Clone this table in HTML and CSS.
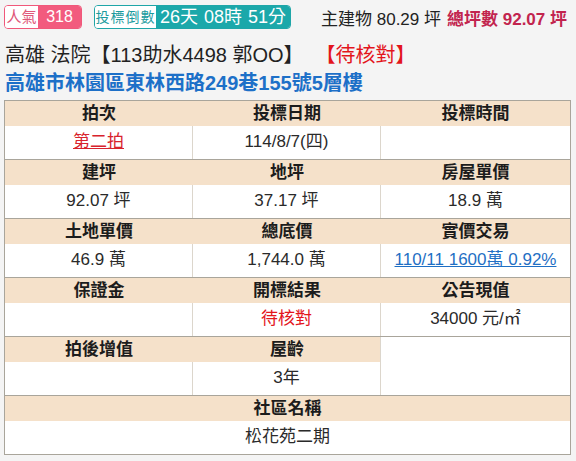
FILE: index.html
```html
<!DOCTYPE html>
<html lang="zh-Hant">
<head>
<meta charset="utf-8">
<link rel="stylesheet" href="styles.css">
</head>
<body>
<div class="page">
  <div class="topbar">
    <div class="badge pop"><span class="b-label">人氣</span><span class="b-value">318</span></div>
    <div class="badge count"><span class="b-label">投標倒數</span><span class="b-value">26天 08時 51分</span></div>
    <div class="area"><span class="main-area">主建物 80.29 坪</span><span class="total-area">總坪數 92.07 坪</span></div>
  </div>
  <div class="case-title">高雄 法院【113助水4498 郭OO】<span class="status">【待核對】</span></div>
  <div class="address">高雄市林園區東林西路249巷155號5層樓</div>

  <div class="info">
    <div class="grp">
      <div class="h">拍次</div><div class="h">投標日期</div><div class="h">投標時間</div>
      <div class="d"><span class="red-link">第二拍</span></div><div class="d">114/8/7(四)</div><div class="d"></div>
    </div>
    <div class="grp">
      <div class="h">建坪</div><div class="h">地坪</div><div class="h">房屋單價</div>
      <div class="d">92.07 坪</div><div class="d">37.17 坪</div><div class="d">18.9 萬</div>
    </div>
    <div class="grp">
      <div class="h">土地單價</div><div class="h">總底價</div><div class="h">實價交易</div>
      <div class="d">46.9 萬</div><div class="d">1,744.0 萬</div><div class="d"><span class="blue-link">110/11 1600萬 0.92%</span></div>
    </div>
    <div class="grp">
      <div class="h">保證金</div><div class="h">開標結果</div><div class="h">公告現值</div>
      <div class="d"></div><div class="d"><span class="red">待核對</span></div><div class="d">34000 元/㎡</div>
    </div>
    <div class="grp">
      <div class="h">拍後增值</div><div class="h">屋齡</div><div class="blank"></div>
      <div class="d"></div><div class="d">3年</div>
    </div>
    <div class="grp">
      <div class="h full">社區名稱</div>
      <div class="d full">松花苑二期</div>
    </div>
  </div>
</div>
</body>
</html>
```

FILE: styles.css
```css
html, body {
  margin: 0;
  padding: 0;
  background: #f4f4f4;
}
body {
  font-family: "Liberation Sans", "Noto Sans CJK TC", sans-serif;
  color: #222;
}
.page {
  padding: 5px 4px 0 4px;
}
.topbar {
  display: flex;
  align-items: center;
  height: 24px;
}
.badge {
  display: flex;
  height: 24px;
  box-sizing: border-box;
  border-radius: 4px;
  overflow: hidden;
  line-height: 22px;
}
.pop {
  border: 1px solid #f0587a;
  width: 78px;
}
.pop .b-label {
  background: #fff;
  color: #e0587a;
  font-size: 15px;
  width: 33px;
  text-align: center;
}
.pop .b-value {
  flex: 1;
  background: #f25b7e;
  color: #fff;
  font-size: 16px;
  text-align: center;
}
.count {
  margin-left: 12px;
  border: 1px solid #1fa6a8;
  width: 197px;
}
.count .b-label {
  background: #fff;
  color: #1b9b9e;
  font-size: 14px;
  letter-spacing: 1px;
  width: 61px;
  text-align: center;
}
.count .b-value {
  flex: 1;
  background: #1ba8aa;
  color: #fff;
  font-size: 18px;
  word-spacing: 1px;
  text-align: center;
}
.area {
  margin-left: auto;
  margin-right: 5px;
  font-size: 17px;
}
.main-area {
  color: #222;
}
.total-area {
  margin-left: 6px;
  color: #c2244e;
  font-weight: bold;
}
.case-title {
  margin-top: 12px;
  height: 28px;
  line-height: 28px;
  font-size: 20px;
  padding-left: 1px;
}
.status {
  margin-left: 22px;
  color: #e3151c;
}
.address {
  height: 28px;
  line-height: 28px;
  font-size: 20px;
  font-weight: bold;
  color: #1d70c8;
  padding-left: 1px;
}
.info {
  margin-top: 3px;
  background: #fff;
  border: 1px solid #a9a59b;
  width: 565px;
}
.grp {
  display: grid;
  grid-template-columns: 188px 188px 189px;
  border-top: 1px solid #a9a59b;
}
.grp:first-child {
  border-top: none;
}
.h, .d {
  text-align: center;
  font-size: 17px;
}
.h {
  background: #f5e1ca;
  height: 25px;
  line-height: 25px;
  font-weight: bold;
  color: #1c1c1c;
}
.d {
  height: 33px;
  line-height: 32px;
  color: #2a2a2a;
}
.grp > .d:not(.full) {
  border-right: 1px solid #dcd6cc;
}
.grp > .d:nth-child(6) {
  border-right: none;
}
.blank {
  grid-row: span 2;
  background: #fff;
  border-left: 1px solid #dcd6cc;
  margin-left: -1px;
}
.full {
  grid-column: 1 / span 3;
}
.red-link {
  color: #d8232d;
  text-decoration: underline;
}
.blue-link {
  color: #1f6fc4;
  text-decoration: underline;
}
.red {
  color: #e3151c;
}
```
